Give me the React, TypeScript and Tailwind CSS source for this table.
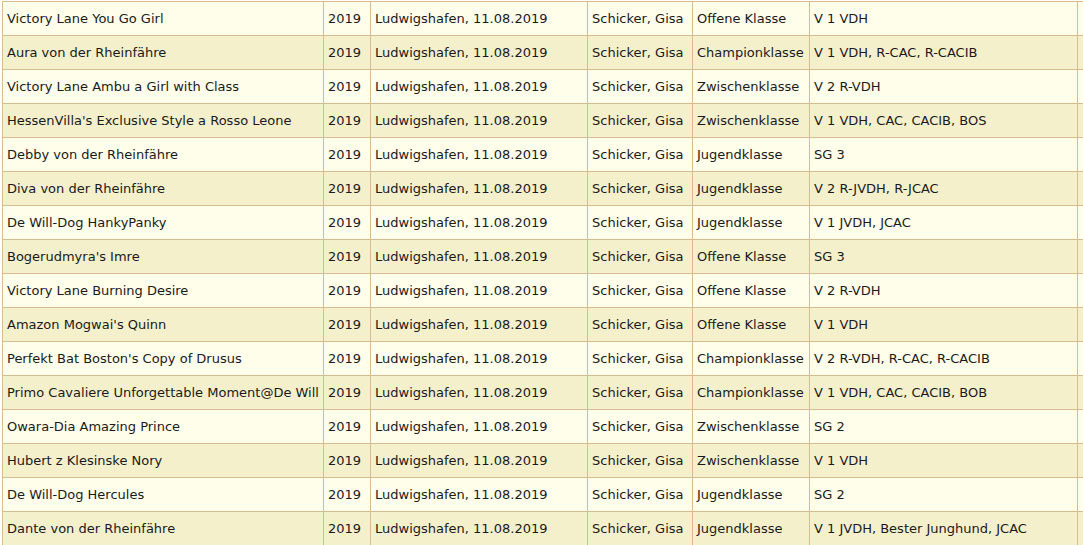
const rows: [string, string, string, string][] = [
  ["Victory Lane You Go Girl", "Offene Klasse", "V 1 VDH", ""],
  ["Aura von der Rheinfähre", "Championklasse", "V 1 VDH, R-CAC, R-CACIB", ""],
  ["Victory Lane Ambu a Girl with Class", "Zwischenklasse", "V 2 R-VDH", ""],
  ["HessenVilla's Exclusive Style a Rosso Leone", "Zwischenklasse", "V 1 VDH, CAC, CACIB, BOS", ""],
  ["Debby von der Rheinfähre", "Jugendklasse", "SG 3", ""],
  ["Diva von der Rheinfähre", "Jugendklasse", "V 2 R-JVDH, R-JCAC", ""],
  ["De Will-Dog HankyPanky", "Jugendklasse", "V 1 JVDH, JCAC", ""],
  ["Bogerudmyra's Imre", "Offene Klasse", "SG 3", ""],
  ["Victory Lane Burning Desire", "Offene Klasse", "V 2 R-VDH", ""],
  ["Amazon Mogwai's Quinn", "Offene Klasse", "V 1 VDH", ""],
  ["Perfekt Bat Boston's Copy of Drusus", "Championklasse", "V 2 R-VDH, R-CAC, R-CACIB", ""],
  ["Primo Cavaliere Unforgettable Moment@De Will", "Championklasse", "V 1 VDH, CAC, CACIB, BOB", ""],
  ["Owara-Dia Amazing Prince", "Zwischenklasse", "SG 2", ""],
  ["Hubert z Klesinske Nory", "Zwischenklasse", "V 1 VDH", ""],
  ["De Will-Dog Hercules", "Jugendklasse", "SG 2", ""],
  ["Dante von der Rheinfähre", "Jugendklasse", "V 1 JVDH, Bester Junghund, JCAC", ""],
];

const td = "border border-[#d9bb90] h-[34px] px-[4px] py-0 whitespace-nowrap overflow-hidden";

export default function App() {
  return (
    <div className="w-[1083px] h-[545px] overflow-hidden bg-white pl-[2px] pt-[1px] font-['Verdana','DejaVu_Sans',sans-serif] text-[13px] text-[#1a1a1a]">
      <table className="border-collapse table-fixed w-[1200px]">
        <colgroup>
          <col className="w-[321px]" />
          <col className="w-[47px]" />
          <col className="w-[217px]" />
          <col className="w-[105px]" />
          <col className="w-[117px]" />
          <col className="w-[268px]" />
          <col className="w-[125px]" />
        </colgroup>
        <tbody>
          {rows.map(([name, klasse, result, extra], i) => (
            <tr key={i} className={i % 2 === 0 ? "bg-[#fffeeb]" : "bg-[#f4f0cc]"}>
              <td className={td}>{name}</td>
              <td className={td}>2019</td>
              <td className={td}>Ludwigshafen, 11.08.2019</td>
              <td className={td}>Schicker, Gisa</td>
              <td className={td}>{klasse}</td>
              <td className={td}>{result}</td>
              <td className={td}>{extra}</td>
            </tr>
          ))}
        </tbody>
      </table>
    </div>
  );
}
